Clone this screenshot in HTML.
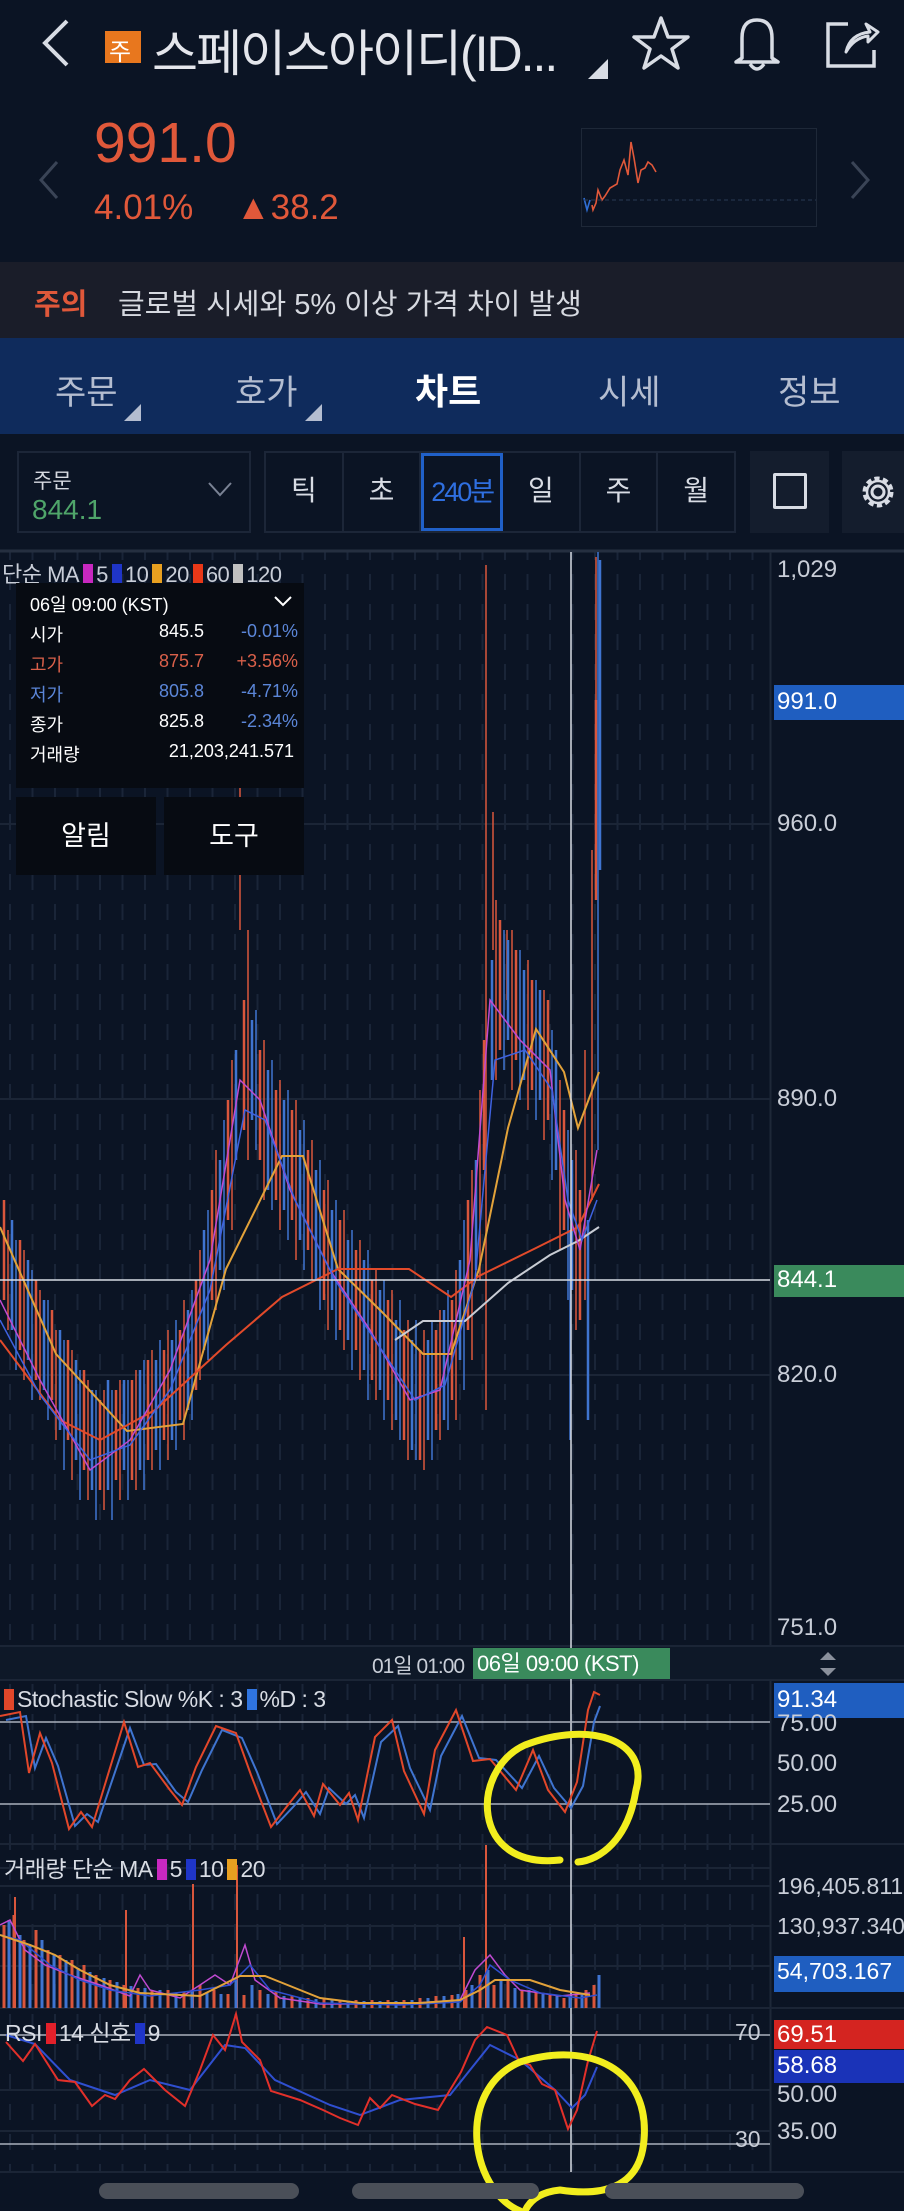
<!DOCTYPE html>
<html><head><meta charset="utf-8"><style>
*{margin:0;padding:0;box-sizing:border-box}
body{width:904px;height:2211px;background:#0b1424;position:relative;overflow:hidden;font-family:"Liberation Sans","Noto Sans CJK KR",sans-serif;color:#d8dce4}
.a{position:absolute;white-space:nowrap}
.lbl{position:absolute;left:777px;font-size:24px;color:#c9ced8;white-space:nowrap}
.info div{position:absolute;font-size:18px;white-space:nowrap}
.sw{display:inline-block;width:10px;height:21px;vertical-align:-3px;margin:0 3px 0 4px}
</style></head><body>
<!-- header -->
<svg class="a" style="left:0;top:0" width="904" height="120">
<path d="M67 21 L45 43 L67 65" stroke="#d8dce4" stroke-width="4" fill="none"/>
<rect x="105" y="31" width="36" height="32" fill="#e8771e"/>
<path d="M588 79 L608 59 L608 79Z" fill="#d8dce4"/>
<path d="M661 18 L668 37 L688 37 L672 49 L678 68 L661 56 L644 68 L650 49 L634 37 L654 37Z" stroke="#d8dce4" stroke-width="3.5" fill="none" stroke-linejoin="round"/>
<path d="M742 58 L742 38 Q742 20 757 20 Q772 20 772 38 L772 58 L778 62 L736 62 L742 58Z M750 64 Q757 74 764 64" stroke="#d8dce4" stroke-width="3.5" fill="none" stroke-linejoin="round"/>
<path d="M848 24 L828 24 L828 66 L874 66 L874 50" stroke="#d8dce4" stroke-width="3.5" fill="none"/>
<path d="M846 52 Q850 34 870 32 L866 24 L878 32 L868 42 L868 36 Q854 38 846 52Z" stroke="#d8dce4" stroke-width="3" fill="none" stroke-linejoin="round"/>
</svg>
<div class="a" style="left:109px;top:32px;font-size:24px;color:#fff">주</div>
<div class="a" style="left:152px;top:14px;font-size:50px;color:#e4e6ec;letter-spacing:-2px">스페이스아이디(ID...</div>
<!-- price -->
<div class="a" style="left:94px;top:110px;font-size:57px;color:#e0583a">991.0</div>
<div class="a" style="left:94px;top:188px;font-size:35px;color:#e0583a">4.01%</div>
<div class="a" style="left:236px;top:188px;font-size:35px;color:#e0583a">▲38.2</div>
<svg class="a" style="left:0;top:120" width="904" height="120">
<path d="M57 42 L41 60 L57 78" stroke="#3a4456" stroke-width="3" fill="none"/>
<path d="M852 42 L868 60 L852 78" stroke="#3a4456" stroke-width="3" fill="none"/>
<rect x="581.5" y="8.5" width="235" height="98" fill="none" stroke="#1e2838"/>
<path d="M592 85 L593 90 L596 83 L598 70 L602 80 L605 76 L610 68 L617 64 L620 50 L624 40 L628 55 L631 22 L634 38 L638 63 L641 50 L645 48 L648 42 L652 45 L656 52" stroke="#e0583a" stroke-width="1.6" fill="none"/>
<path d="M584 78 L587 90 L590 80" stroke="#2f6fd6" stroke-width="1.6" fill="none"/>
<path d="M584 80 H816" stroke="#2a3a54" stroke-dasharray="4 3"/>
</svg>
<!-- warning -->
<div class="a" style="left:0;top:262px;width:904px;height:76px;background:#1a1d29"></div>
<div class="a" style="left:34px;top:281px;font-size:29px;font-weight:bold;color:#e0583a">주의</div>
<div class="a" style="left:118px;top:281px;font-size:29px;color:#d6d9e0">글로벌 시세와 5% 이상 가격 차이 발생</div>
<!-- tabs -->
<div class="a" style="left:0;top:338px;width:904px;height:96px;background:#0f2b5c"></div>
<div class="a" style="left:55px;top:365px;font-size:34px;color:#b4bdd0">주문</div>
<div class="a" style="left:235px;top:365px;font-size:34px;color:#b4bdd0">호가</div>
<div class="a" style="left:415px;top:363px;font-size:36px;font-weight:bold;color:#fff">차트</div>
<div class="a" style="left:598px;top:365px;font-size:34px;color:#b4bdd0">시세</div>
<div class="a" style="left:778px;top:365px;font-size:34px;color:#b4bdd0">정보</div>
<svg class="a" style="left:0;top:338" width="904" height="96"><path d="M124 83 L141 66 L141 83Z M305 83 L322 66 L322 83Z" fill="#b4bdd0"/></svg>
<!-- toolbar -->
<div class="a" style="left:17px;top:451px;width:234px;height:82px;border:2px solid #1c2638;background:#0b1424"></div>
<div class="a" style="left:33px;top:465px;font-size:21px;color:#d6d9e0">주문</div>
<div class="a" style="left:32px;top:494px;font-size:28px;color:#4fa56a">844.1</div>
<svg class="a" style="left:200px;top:470px" width="40" height="40"><path d="M9 13 L20 25 L31 13" stroke="#7a8294" stroke-width="2" fill="none"/></svg>
<div class="a" style="left:264px;top:451px;width:472px;height:82px;border:2px solid #1c2638;display:flex">
<div style="flex:1;border-right:2px solid #1c2638;text-align:center;font-size:28px;line-height:76px">틱</div>
<div style="flex:1;border-right:2px solid #1c2638;text-align:center;font-size:28px;line-height:76px">초</div>
<div style="flex:1;border:3px solid #2060c8;text-align:center;font-size:27px;line-height:72px;color:#2f6fe0;letter-spacing:-2px">240분</div>
<div style="flex:1;border-right:2px solid #1c2638;text-align:center;font-size:28px;line-height:76px">일</div>
<div style="flex:1;border-right:2px solid #1c2638;text-align:center;font-size:28px;line-height:76px">주</div>
<div style="flex:1;text-align:center;font-size:28px;line-height:76px">월</div>
</div>
<div class="a" style="left:750px;top:451px;width:79px;height:82px;background:#141d2d"></div>
<div class="a" style="left:773px;top:473px;width:34px;height:36px;border:3px solid #d8dce4;border-radius:2px"></div>
<div class="a" style="left:842px;top:451px;width:62px;height:82px;background:#141d2d"></div>
<svg class="a" style="left:858px;top:472px" width="40" height="40"><circle cx="20" cy="20" r="6" stroke="#d8dce4" stroke-width="3" fill="none"/><circle cx="20" cy="20" r="13" stroke="#d8dce4" stroke-width="5" fill="none" stroke-dasharray="5 3.2"/><circle cx="20" cy="20" r="11" stroke="#d8dce4" stroke-width="2.5" fill="none"/></svg>

<!-- chart svg -->
<svg class="a" style="left:0;top:0" width="904" height="2211">
<defs><pattern id="vg" x="0" y="0" width="22.5" height="30" patternUnits="userSpaceOnUse"><path d="M10 4 V20" stroke="#1a2538" stroke-width="2"/></pattern></defs>
<rect x="0" y="552" width="770" height="1620" fill="url(#vg)"/>
<path d="M0 551 H904" stroke="#252f40" stroke-width="3"/>
<path d="M770.5 552 V2172" stroke="#1e2838" stroke-width="2"/>
<path d="M0 824 H770 M0 1099 H770 M0 1375 H770 M0 1646 H904 M0 1680 H904 M0 1844 H904 M0 1868 H770 M0 1886 H770 M0 1926 H770 M0 1966 H770 M0 2008 H904 M0 2090 H770 M0 2131 H770 M0 2172 H904" stroke="#1b2536" stroke-width="2"/>
<rect x="0" y="1647" width="904" height="32" fill="#0e1828"/>
<!-- candles -->
<path stroke="#d9563c" stroke-width="2.5" fill="none" d="M4 1200V1300M20 1240V1350M36 1280V1380M52 1310V1400M68 1340V1440M84 1370V1470M100 1400V1490M116 1390V1480M132 1380V1480M148 1360V1460M164 1350V1440M180 1330V1420M196 1280V1390M212 1190V1300M228 1100V1220M244 1000V1130M260 1050V1160M276 1090V1200M292 1110V1220M308 1150V1250M324 1190V1300M340 1220V1330M356 1250V1350M372 1280V1380M388 1300V1400M404 1330V1440M420 1350V1460M436 1330V1430M452 1300V1400M468 1200V1330M484 1040V1170M500 920V1050M516 950V1060M532 980V1090M548 1000V1120M564 1110V1230M580 1190V1320M596 700V900"/>
<path stroke="#d9563c" stroke-width="1.5" fill="none" d="M8 1230V1330M24 1250V1380M40 1290V1400M56 1330V1440M72 1350V1480M88 1380V1500M104 1390V1510M120 1380V1500M136 1370V1490M152 1350V1470M168 1330V1460M184 1300V1440M200 1250V1380M216 1150V1310M232 1060V1230M248 930V1160M264 1040V1200M280 1080V1230M296 1100V1260M312 1140V1280M328 1180V1330M344 1210V1350M360 1240V1380M376 1270V1400M392 1290V1430M408 1320V1460M424 1330V1470M440 1310V1440M456 1270V1420M472 1170V1360M480 1090V1280M496 900V1080M512 930V1090M528 960V1110M544 990V1140M560 1080V1250M576 1150V1330M592 850V1200"/>
<path stroke="#d9563c" stroke-width="1.5" fill="none" d="M240 565V930M486 565V1410M596 557V700M493 812V950M507 930V1000M585 1050V1300"/>
<path stroke="#3f74d0" stroke-width="2.5" fill="none" d="M12 1220V1330M28 1260V1360M44 1300V1390M60 1330V1430M76 1360V1460M92 1390V1490M108 1380V1490M124 1380V1470M140 1370V1470M156 1360V1450M172 1340V1440M188 1310V1410M204 1230V1350M220 1160V1270M236 1050V1160M252 1020V1120M268 1070V1190M284 1100V1210M300 1130V1240M316 1170V1280M332 1210V1310M348 1240V1340M364 1260V1370M380 1290V1390M396 1320V1420M412 1340V1450M428 1340V1440M444 1310V1420M460 1260V1360M476 1160V1270M492 960V1080M508 940V1040M524 970V1080M540 990V1100M556 1050V1170M572 1160V1290M588 1220V1420M600 560V870"/>
<path stroke="#3f74d0" stroke-width="1.5" fill="none" d="M16 1240V1370M32 1270V1400M48 1300V1420M64 1340V1470M80 1370V1500M96 1390V1520M112 1390V1520M128 1380V1500M144 1360V1490M160 1340V1470M176 1320V1450M192 1290V1420M208 1210V1360M224 1120V1290M256 1010V1150M272 1060V1210M288 1090V1240M304 1120V1270M320 1160V1310M336 1200V1340M352 1230V1370M368 1250V1400M384 1280V1420M400 1300V1440M416 1320V1460M432 1320V1460M448 1290V1430M464 1220V1390M504 930V1070M520 950V1100M536 980V1120M552 1030V1180M568 1130V1300M598 552V1150M570 1230V1440"/>
<!-- MAs -->
<polyline fill="none" stroke="#e2a23a" stroke-width="2" points="0,1227 56,1354 127,1431 183,1424 226,1269 282,1156 303,1156 338,1269 381,1311 423,1354 451,1354 479,1269 508,1128 536,1029 564,1072 578,1128 599,1072"/>
<polyline fill="none" stroke="#e24a2a" stroke-width="2" points="0,1340 60,1420 100,1440 155,1410 226,1345 282,1297 338,1269 409,1269 451,1297 479,1276 536,1248 578,1227 599,1184"/>
<polyline fill="none" stroke="#c8ccd4" stroke-width="2" points="395,1340 423,1321 465,1321 508,1283 550,1255 578,1241 599,1227"/>
<polyline fill="none" stroke="#c04ad0" stroke-width="1.5" points="0,1300 40,1380 90,1470 130,1440 170,1370 210,1260 240,1080 260,1100 290,1190 330,1270 370,1330 410,1400 440,1390 470,1260 490,1000 520,1040 550,1070 565,1200 580,1250 597,1150"/>
<polyline fill="none" stroke="#3f62e0" stroke-width="1.5" points="0,1320 40,1395 90,1460 130,1445 170,1390 210,1290 245,1110 265,1120 295,1200 335,1280 375,1340 415,1400 445,1385 475,1280 495,1060 525,1050 552,1090 568,1200 582,1240 597,1200"/>
<path d="M0 1280 H770" stroke="#d8dce4" stroke-width="1.5"/>
<path d="M571 552 V2172" stroke="#d8dce4" stroke-width="1.5"/>
<!-- stochastic -->
<path d="M0 1722 H770 M0 1804 H770" stroke="#aab0bc" stroke-width="1.5"/>
<polyline fill="none" stroke="#3f74d0" stroke-width="2" points="6,1720 26,1716 35,1768 46,1738 58,1766 75,1826 87,1814 98,1822 130,1728 144,1765 156,1764 176,1792 188,1802 202,1770 222,1730 242,1738 257,1772 277,1824 294,1806 306,1792 320,1814 329,1788 346,1804 355,1795 364,1818 381,1742 398,1726 410,1768 430,1810 441,1756 462,1716 479,1758 496,1760 522,1788 539,1756 554,1788 571,1808 583,1786 594,1722 600,1706"/>
<polyline fill="none" stroke="#e2472a" stroke-width="2" points="0,1716 20,1712 29,1773 40,1733 52,1763 69,1829 81,1812 92,1827 124,1722 138,1767 150,1763 170,1790 182,1805 196,1767 216,1726 236,1733 251,1775 271,1827 288,1805 300,1790 314,1816 323,1784 340,1805 349,1793 358,1820 375,1737 392,1720 404,1771 424,1814 435,1750 456,1710 473,1761 490,1759 516,1790 533,1750 548,1790 565,1812 577,1782 588,1710 594,1692 600,1695"/>
<!-- volume -->
<path stroke="#d9563c" stroke-width="3" fill="none" d="M4 1925V2008M14 1915V2008M24 1940V2008M36 1930V2008M48 1950V2008M60 1955V2008M72 1960V2008M84 1965V2008M96 1975V2008M110 1980V2008M124 1985V2008M138 1988V2008M152 1990V2008M168 1990V2008M184 1992V2008M200 1985V2008M214 1990V2008M228 1994V2008M244 1995V2008M260 1990V2008M276 1992V2008M292 1996V2008M308 1998V2008M324 1999V2008M340 2000V2008M356 2000V2008M372 2000V2008M388 2000V2008M404 2000V2008M420 1998V2008M436 1996V2008M452 1995V2008M466 1990V2008M480 1975V2008M494 1985V2008M508 1980V2008M522 1990V2008M536 1992V2008M550 1995V2008M564 1998V2008M576 1995V2008M586 1990V2008M594 1985V2008"/>
<path stroke="#d9563c" stroke-width="2" fill="none" d="M15 1897V2008M126 1910V2008M193 1884V2008M237 1865V2008M486 1845V2008M464 1937V2008M36 1930V2008"/>
<path stroke="#3f74d0" stroke-width="3" fill="none" d="M9 1920V2008M20 1935V2008M30 1945V2008M42 1940V2008M54 1955V2008M66 1960V2008M78 1968V2008M90 1972V2008M104 1978V2008M117 1982V2008M131 1986V2008M145 1988V2008M160 1990V2008M176 1993V2008M192 1990V2008M207 1992V2008M221 1994V2008M236 1980V2008M252 1985V2008M268 1994V2008M284 1996V2008M300 1998V2008M316 1999V2008M332 2000V2008M348 2001V2008M364 2001V2008M380 2001V2008M396 2001V2008M412 2000V2008M428 1998V2008M444 1996V2008M458 1994V2008M472 1985V2008M488 1970V2008M501 1980V2008M515 1988V2008M529 1990V2008M543 1993V2008M557 1996V2008M570 1997V2008M582 1993V2008M599 1975V2008"/>
<polyline fill="none" stroke="#c04ad0" stroke-width="1.5" points="0,1925 10,1920 25,1950 45,1965 70,1975 100,1985 130,1996 140,1975 150,1990 180,1998 200,1985 215,1975 230,1985 245,1945 255,1980 280,1998 320,2004 400,2004 460,2000 475,1970 490,1955 505,1975 520,1990 560,1996 590,1993"/>
<polyline fill="none" stroke="#2f4fd0" stroke-width="1.5" points="0,1935 20,1940 50,1965 80,1980 110,1990 150,1996 200,1990 230,1985 250,1965 270,1990 320,2003 400,2005 460,2002 480,1985 490,1965 510,1980 540,1993 580,1998 597,1995"/>
<polyline fill="none" stroke="#e2a23a" stroke-width="2" points="0,1935 30,1945 55,1955 80,1970 110,1985 140,1993 200,1996 240,1976 265,1976 300,1990 320,1998 360,2003 420,2003 460,2000 480,1990 495,1980 530,1980 560,1990 590,1995"/>
<!-- RSI -->
<path d="M0 2035 H770 M0 2144 H770" stroke="#aab0bc" stroke-width="1.5"/>
<polyline fill="none" stroke="#2f4fd0" stroke-width="2" points="6,2035 35,2044 70,2080 115,2095 150,2080 190,2090 225,2045 245,2048 275,2080 330,2105 360,2115 400,2100 450,2095 490,2045 520,2060 555,2090 572,2108 585,2095 597,2067"/>
<polyline fill="none" stroke="#e2302a" stroke-width="2" points="6,2042 23,2061 35,2044 58,2080 75,2082 92,2106 105,2095 115,2099 130,2080 144,2069 165,2090 185,2106 200,2070 213,2035 225,2050 236,2014 242,2042 260,2060 271,2091 300,2100 323,2110 340,2118 358,2125 370,2098 380,2108 392,2095 415,2104 438,2110 450,2090 461,2072 475,2040 487,2027 507,2035 519,2061 530,2065 542,2084 555,2090 568,2129 577,2110 588,2061 597,2031"/>
<!-- yellow annotations -->
<path d="M560 1860 C470 1870 470 1770 525 1745 C590 1720 650 1740 636 1790 C628 1840 600 1860 578 1862" stroke="#f2ee1e" stroke-width="7" fill="none" stroke-linecap="round"/>
<path d="M520 2211 C470 2190 455 2090 520 2062 C590 2040 650 2070 644 2140 C640 2190 600 2196 560 2190 C540 2192 530 2200 525 2211" stroke="#f2ee1e" stroke-width="7" fill="none" stroke-linecap="round"/>
<!-- bottom bars -->
<rect x="99" y="2183" width="200" height="16" rx="8" fill="#4a4f58"/>
<rect x="352" y="2183" width="187" height="16" rx="8" fill="#4a4f58"/>
<rect x="605" y="2183" width="199" height="16" rx="8" fill="#4a4f58"/>
<path d="M820 1660 L836 1660 L828 1652Z M820 1668 L836 1668 L828 1676Z" fill="#8a909c"/>
</svg>

<div class="a" style="left:2px;top:557px;font-size:22px;color:#c9ced8;letter-spacing:-0.5px">단순 MA<span class="sw" style="background:#c828c0"></span>5<span class="sw" style="background:#1f35c8"></span>10<span class="sw" style="background:#e8a020"></span>20<span class="sw" style="background:#e83818"></span>60<span class="sw" style="background:#c0c0c0"></span>120</div>
<!-- info box -->
<div class="a info" style="left:16px;top:583px;width:288px;height:205px;background:#070b12">
<div style="left:14px;top:8px;color:#fff">06일 09:00 (KST)</div>
<svg style="position:absolute;left:256px;top:10px" width="22" height="16"><path d="M3 4 L11 12 L19 4" stroke="#fff" stroke-width="2" fill="none"/></svg>
<div style="left:14px;top:38px;color:#fff">시가</div><div style="right:100px;top:38px;color:#fff">845.5</div><div style="right:6px;top:38px;color:#5b86d8">-0.01%</div>
<div style="left:14px;top:68px;color:#d9604a">고가</div><div style="right:100px;top:68px;color:#d9604a">875.7</div><div style="right:6px;top:68px;color:#d9604a">+3.56%</div>
<div style="left:14px;top:98px;color:#5b86d8">저가</div><div style="right:100px;top:98px;color:#5b86d8">805.8</div><div style="right:6px;top:98px;color:#5b86d8">-4.71%</div>
<div style="left:14px;top:128px;color:#fff">종가</div><div style="right:100px;top:128px;color:#fff">825.8</div><div style="right:6px;top:128px;color:#5b86d8">-2.34%</div>
<div style="left:14px;top:158px;color:#fff">거래량</div><div style="right:10px;top:158px;color:#fff">21,203,241.571</div>
</div>
<div class="a" style="left:16px;top:797px;width:140px;height:78px;background:#070b12;color:#fff;font-size:27px;text-align:center;line-height:78px">알림</div>
<div class="a" style="left:164px;top:797px;width:140px;height:78px;background:#070b12;color:#fff;font-size:27px;text-align:center;line-height:78px">도구</div>
<!-- price labels -->
<div class="lbl" style="top:556px">1,029</div>
<div class="a" style="left:774px;top:685px;width:130px;height:35px;background:#1f5ec0"></div>
<div class="lbl" style="top:688px;color:#fff">991.0</div>
<div class="lbl" style="top:810px">960.0</div>
<div class="lbl" style="top:1085px">890.0</div>
<div class="a" style="left:774px;top:1265px;width:130px;height:32px;background:#3a8a5c"></div>
<div class="lbl" style="top:1266px;color:#fff">844.1</div>
<div class="lbl" style="top:1361px">820.0</div>
<div class="lbl" style="top:1614px">751.0</div>
<!-- timeline -->
<div class="a" style="left:372px;top:1650px;font-size:21px;color:#c9ced8;letter-spacing:-1px">01일 01:00</div>
<div class="a" style="left:473px;top:1648px;width:197px;height:31px;background:#3a8a5c;color:#fff;font-size:22px;line-height:31px;padding-left:4px;letter-spacing:-0.5px">06일 09:00 (KST)</div>
<!-- stochastic -->
<div class="a" style="left:0px;top:1686px;font-size:23px;color:#d8dce4;letter-spacing:-0.5px"><span class="sw" style="background:#e2472a;margin-left:4px"></span>Stochastic Slow %K : 3<span class="sw" style="background:#2f74e0"></span>%D : 3</div>
<div class="a" style="left:774px;top:1683px;width:130px;height:35px;background:#1f5ec0"></div>
<div class="lbl" style="top:1686px;color:#fff">91.34</div>
<div class="lbl" style="top:1710px">75.00</div>
<div class="lbl" style="top:1750px">50.00</div>
<div class="lbl" style="top:1791px">25.00</div>
<!-- volume -->
<div class="a" style="left:4px;top:1850px;font-size:23px;color:#d8dce4;letter-spacing:-0.5px">거래량 단순 MA<span class="sw" style="background:#c828c0"></span>5<span class="sw" style="background:#1f35c8"></span>10<span class="sw" style="background:#e8a020"></span>20</div>
<div class="lbl" style="top:1873px;font-size:23px">196,405.811</div>
<div class="lbl" style="top:1913px;font-size:23px">130,937.340</div>
<div class="a" style="left:774px;top:1956px;width:130px;height:36px;background:#1f5ec0"></div>
<div class="lbl" style="top:1958px;font-size:23px;color:#fff">54,703.167</div>
<!-- rsi -->
<div class="a" style="left:5px;top:2014px;font-size:23px;color:#d8dce4;letter-spacing:-0.5px">RSI<span class="sw" style="background:#e2202a"></span>14 신호<span class="sw" style="background:#1f35c8"></span>9</div>
<div class="a" style="left:735px;top:2019px;font-size:23px;color:#c9ced8">70</div>
<div class="a" style="left:735px;top:2126px;font-size:23px;color:#c9ced8">30</div>
<div class="a" style="left:774px;top:2020px;width:130px;height:29px;background:#d42420"></div>
<div class="lbl" style="top:2021px;color:#fff">69.51</div>
<div class="a" style="left:774px;top:2050px;width:130px;height:33px;background:#1a33b8"></div>
<div class="lbl" style="top:2052px;color:#fff">58.68</div>
<div class="lbl" style="top:2081px">50.00</div>
<div class="lbl" style="top:2118px">35.00</div>
</body></html>
